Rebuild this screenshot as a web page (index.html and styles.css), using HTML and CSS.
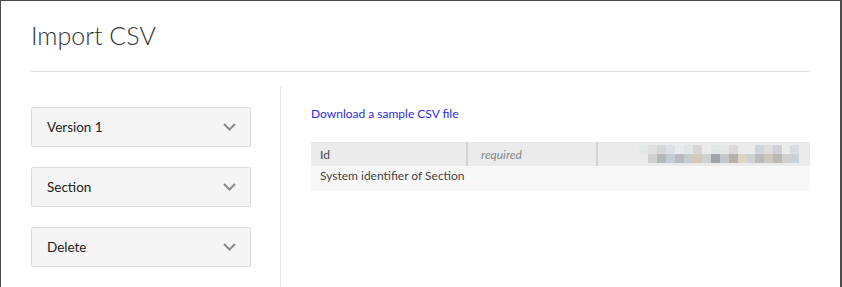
FILE: index.html
```html
<!DOCTYPE html>
<html lang="en">
<head>
  <meta charset="UTF-8">
  <title>Import CSV</title>
  <link rel="stylesheet" href="styles.css">
</head>
<body>

  <div class="modal">
    <h1 class="modal-title">Import CSV</h1>
    <div class="modal-body">
      <div class="sidebar">
        <div class="select-box">
          <span>Version 1</span>
          <svg class="chevron" width="13" height="8" viewBox="0 0 13 8"><path d="M1 1l5.5 5.5L12 1" fill="none" stroke="#8a8a8a" stroke-width="2"/></svg>
        </div>
        <div class="select-box">
          <span>Section</span>
          <svg class="chevron" width="13" height="8" viewBox="0 0 13 8"><path d="M1 1l5.5 5.5L12 1" fill="none" stroke="#8a8a8a" stroke-width="2"/></svg>
        </div>
        <div class="select-box">
          <span>Delete</span>
          <svg class="chevron" width="13" height="8" viewBox="0 0 13 8"><path d="M1 1l5.5 5.5L12 1" fill="none" stroke="#8a8a8a" stroke-width="2"/></svg>
        </div>
      </div>

      <div class="content">
        <a class="sample-link" href="#">Download a sample CSV file</a>
        <table class="fields">
          <tr class="head">
            <td class="col-name">Id</td>
            <td class="col-req">required</td>
            <td class="col-sample">
              <svg width="160" height="18" viewBox="0 0 160 18">
                <rect x="0" y="0" width="9" height="9" fill="#e4e8e8"/>
                <rect x="9" y="0" width="9" height="9" fill="#e0e0e0"/>
                <rect x="18" y="0" width="9" height="9" fill="#d6d6d6"/>
                <rect x="27" y="0" width="9" height="9" fill="#dde0e4"/>
                <rect x="36" y="0" width="9" height="9" fill="#e8eaee"/>
                <rect x="45" y="0" width="9" height="9" fill="#e2e6e6"/>
                <rect x="54" y="0" width="9" height="9" fill="#d9d5d2"/>
                <rect x="72" y="0" width="9" height="9" fill="#e2e6e6"/>
                <rect x="81" y="0" width="9" height="9" fill="#e6e8e8"/>
                <rect x="90" y="0" width="9" height="9" fill="#ddd8da"/>
                <rect x="116" y="0" width="9" height="9" fill="#d2d4de"/>
                <rect x="125" y="0" width="9" height="9" fill="#e0dedc"/>
                <rect x="134" y="0" width="9" height="9" fill="#d0d0da"/>
                <rect x="151" y="0" width="9" height="9" fill="#d6dee2"/>
                <rect x="9" y="9" width="9" height="9" fill="#d0d2d2"/>
                <rect x="18" y="9" width="9" height="9" fill="#b4b8b8"/>
                <rect x="27" y="9" width="9" height="9" fill="#c4ccd4"/>
                <rect x="36" y="9" width="9" height="9" fill="#b8bcc2"/>
                <rect x="45" y="9" width="9" height="9" fill="#c4cccc"/>
                <rect x="54" y="9" width="9" height="9" fill="#d6c8b8"/>
                <rect x="63" y="9" width="9" height="9" fill="#d0d2d2"/>
                <rect x="72" y="9" width="9" height="9" fill="#a0a4a8"/>
                <rect x="81" y="9" width="9" height="9" fill="#c4c8cc"/>
                <rect x="90" y="9" width="9" height="9" fill="#b8b0ac"/>
                <rect x="99" y="9" width="9" height="9" fill="#dcd4c4"/>
                <rect x="108" y="9" width="8" height="9" fill="#d0d2d2"/>
                <rect x="116" y="9" width="9" height="9" fill="#bcbcbc"/>
                <rect x="125" y="9" width="9" height="9" fill="#ccc8c0"/>
                <rect x="134" y="9" width="9" height="9" fill="#bcbab4"/>
                <rect x="143" y="9" width="8" height="9" fill="#d0d0cc"/>
                <rect x="151" y="9" width="9" height="9" fill="#c8d0d8"/>
              </svg>
            </td>
          </tr>
          <tr class="desc">
            <td colspan="3">System identifier of Section</td>
          </tr>
        </table>
      </div>
    </div>
  </div>

</body>
</html>
```

FILE: styles.css
```css
html, body {
  margin: 0;
  height: 287px;
  overflow: hidden;
}

body {
  background: #4b4b4b;
  font-family: 'Lato', 'Liberation Sans', sans-serif;
  color: #333;
}

.modal {
  background: white;
  margin: 1px 2px 0 1px;
  height: 286px;
  padding: 0 30px;
}

.modal-title {
  margin: 0;
  padding: 17px 0 19px;
  font-size: 25px;
  font-weight: 300;
  line-height: 34px;
  color: #333;
  border-bottom: 1px solid #e3e3e3;
}

.modal-body {
  display: flex;
  margin-top: 15px;
  height: 200px;
}

.sidebar {
  width: 251px;
  border-right: 1px solid #e3e3e3;
  padding-top: 20px;
  display: flex;
  flex-direction: column;
  gap: 20px;
}

.select-box {
  height: 38px;
  background: #f5f5f5;
  border: 1px solid #dcdcdc;
  border-radius: 2px;
  display: flex;
  align-items: center;
  justify-content: space-between;
  padding: 0 14px 0 15px;
  box-sizing: content-box;
  width: 189px;
  font-size: 13.5px;
  color: #222;
}

.chevron {
  margin-top: -1px;
}

.content {
  flex: 1;
  padding: 20px 0 0 30px;
}

.sample-link {
  display: block;
  font-size: 12px;
  color: #2a2af0;
  text-decoration: none;
  line-height: 14px;
  margin-bottom: 21px;
}

.fields {
  width: 499px;
  border-collapse: collapse;
  font-size: 12px;
}

.fields td {
  padding: 0 9px;
}

.head {
  background: #ebebeb;
  height: 24px;
}

.col-name {
  width: 137px;
  border-right: 2px solid #d2d2d2;
  color: #444;
}

.col-req {
  width: 106px;
  border-right: 2px solid #d2d2d2;
  font-style: italic;
  color: #888;
  padding-left: 13px !important;
}

.col-sample {
  text-align: right;
  padding-right: 11px !important;
}

.col-sample svg {
  display: block;
  margin-left: auto;
}

.desc {
  background: #f8f8f8;
  height: 25px;
}

.desc td {
  vertical-align: top;
  padding-top: 2px;
  color: #444;
}
```
